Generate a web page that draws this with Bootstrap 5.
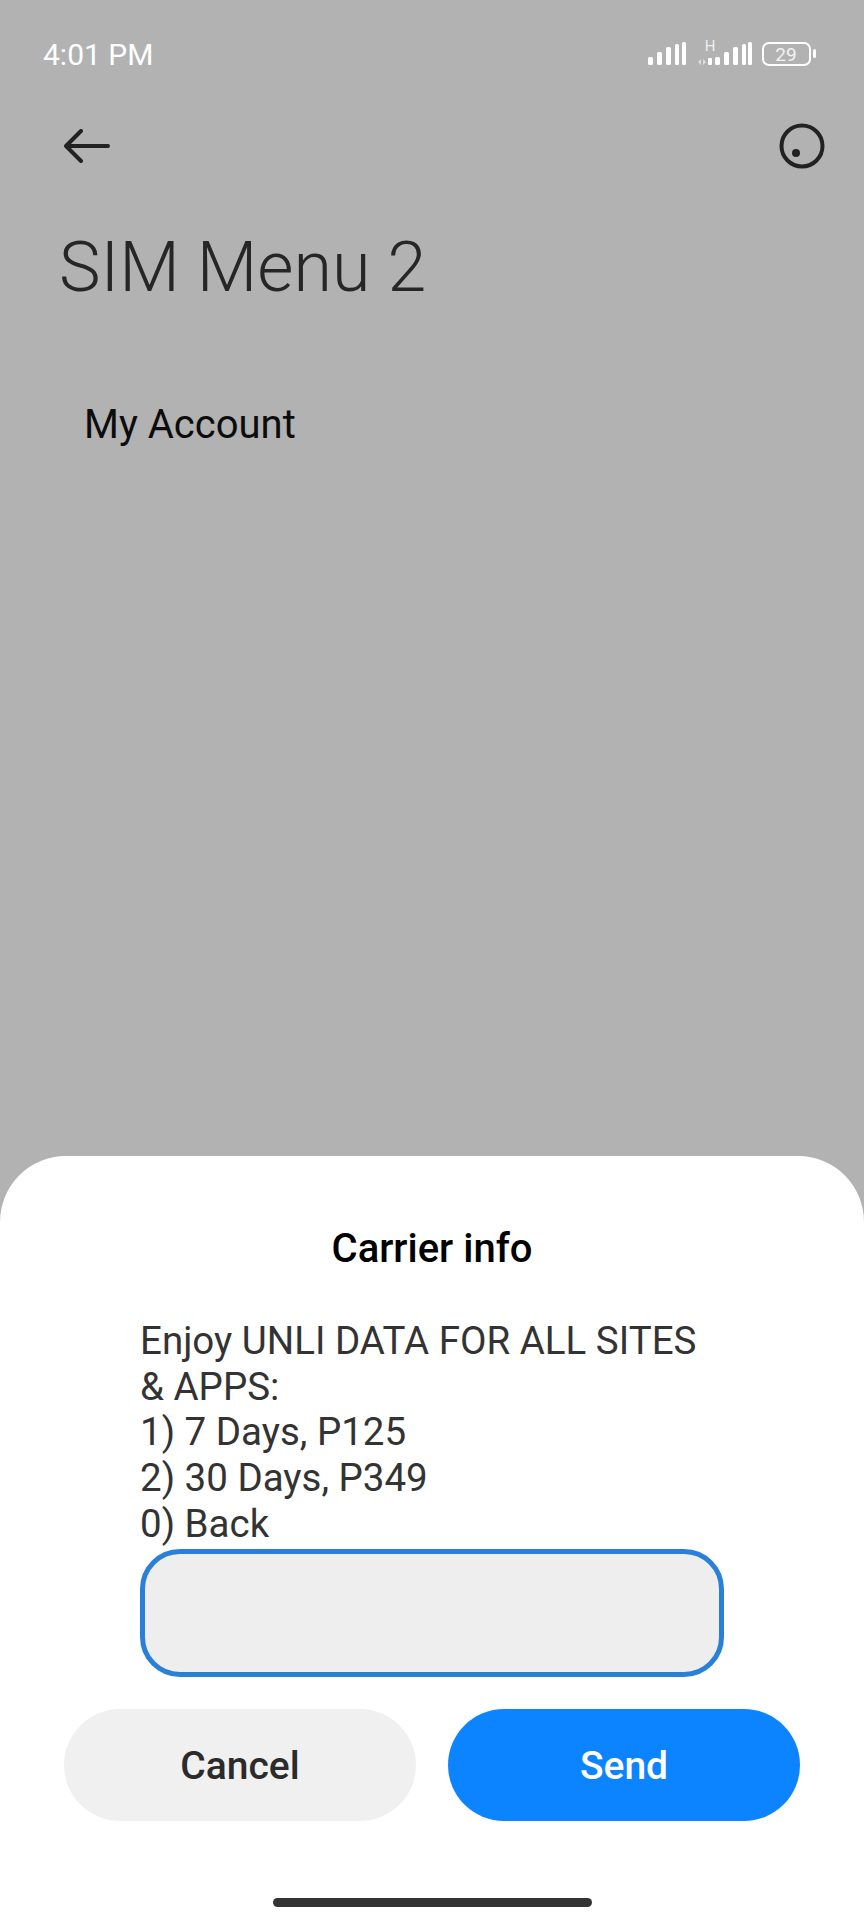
<!DOCTYPE html>
<html lang="en">
<head>
    <meta charset="UTF-8">
    <meta name="viewport" content="width=device-width, initial-scale=1.0">
    <title>SIM Menu 2</title>
    <link href="https://cdn.jsdelivr.net/npm/bootstrap@5.3.0/dist/css/bootstrap.min.css" rel="stylesheet">
    <style>
        body {
            font-family: Roboto, "Liberation Sans", sans-serif;
            background: #b2b2b2;
        }

        .phone-screen {
            width: 864px;
            height: 1920px;
            overflow: hidden;
            background: #b2b2b2;
        }

        .status-row {
            height: 72px;
            padding: 36px 40px 0 43px;
        }

        .status-time {
            font-size: 30px;
            line-height: 38px;
            color: #fff;
        }

        .top-row {
            height: 66px;
            margin-top: 41px;
            padding: 0 39px 0 64px;
        }

        .page-title {
            font-size: 70px;
            font-weight: 300;
            line-height: 84px;
            color: #262626;
            margin: 0;
            padding: 46px 0 0 59px;
        }

        .menu-row {
            font-size: 40px;
            line-height: 48px;
            color: #0c0c0c;
            padding: 92px 0 0 84px;
        }

        .sheet-panel {
            height: 764px;
            background: #fff;
            border-radius: 66px 66px 0 0;
            padding-top: 69px;
        }

        .sheet-title {
            font-size: 40px;
            font-weight: 500;
            line-height: 48px;
            color: #000;
            margin: 0;
        }

        .sheet-text {
            font-size: 38.5px;
            line-height: 45.7px;
            color: #333;
            margin: 45px 0 0 140px;
            width: 590px;
        }

        .reply-box {
            display: block;
            width: 584px;
            height: 128px;
            margin: 2px 0 0 140px;
            background: #eeeeef;
            border: 5px solid #2a80d8;
            border-radius: 40px;
        }

        .reply-box:focus {
            outline: none;
        }

        .sheet-actions {
            gap: 32px;
            margin: 32px 64px 0;
        }

        .sheet-btn {
            width: 352px;
            height: 112px;
            border: 0;
            border-radius: 56px;
            padding-top: 10px;
            font-size: 39px;
            font-weight: 500;
        }

        .sheet-btn.cancel-btn {
            background: #f0f0f0;
            color: #2b2b2b;
        }

        .sheet-btn.send-btn {
            background: #0d84ff;
            color: #fff;
        }

        .home-bar {
            width: 319px;
            height: 9px;
            margin: 77px auto 0;
            background: #333;
            border-radius: 5px;
        }
    </style>
</head>
<body class="m-0">
    <div class="phone-screen d-flex flex-column">
        <div class="status-row d-flex justify-content-between align-items-start">
            <span class="status-time">4:01 PM</span>
            <svg width="176" height="36" viewBox="0 0 176 36" fill="#fff" class="d-block">
                <!-- first signal -->
                <rect x="0" y="21" width="5" height="8" rx="1.5"/>
                <rect x="9" y="16" width="5" height="13" rx="1.5"/>
                <rect x="18" y="11" width="5" height="18" rx="1.5"/>
                <rect x="27" y="8" width="4" height="21" rx="1.5"/>
                <rect x="34" y="6" width="4" height="23" rx="1.5"/>
                <!-- second signal with H -->
                <text x="62" y="15" font-size="15" font-family="Roboto" text-anchor="middle" fill="#eee">H</text>
                <path d="M53 23l-3 3 3 3zM55 23l3 3-3 3z" fill="#ddd"/>
                <rect x="60" y="22" width="4" height="7" rx="1"/>
                <rect x="67" y="21" width="5" height="8" rx="1.5"/>
                <rect x="76" y="16" width="5" height="13" rx="1.5"/>
                <rect x="85" y="11" width="5" height="18" rx="1.5"/>
                <rect x="94" y="8" width="4" height="21" rx="1.5"/>
                <rect x="100" y="6" width="4" height="23" rx="1.5"/>
                <!-- battery -->
                <rect x="115" y="7" width="47" height="22" rx="6" fill="none" stroke="#fff" stroke-width="2"/>
                <text x="138" y="24.5" font-size="19" font-family="Roboto" text-anchor="middle" fill="#f2f2f2">29</text>
                <rect x="165" y="13" width="3" height="9" rx="1.5"/>
            </svg>
        </div>

        <div class="top-row d-flex justify-content-between align-items-center">
            <svg width="46" height="34" viewBox="0 0 46 34" fill="none" stroke="#222" stroke-width="4" stroke-linecap="round" stroke-linejoin="round">
                <path d="M44 17H3M17 2 2 17l15 15"/>
            </svg>
            <svg width="46" height="46" viewBox="0 0 46 46" fill="none">
                <circle cx="23" cy="23" r="20.5" stroke="#222" stroke-width="4"/>
                <circle cx="17" cy="30" r="4" fill="#222"/>
            </svg>
        </div>

        <h1 class="page-title">SIM Menu 2</h1>
        <div class="menu-row">My Account</div>

        <div class="sheet-panel mt-auto">
            <h2 class="sheet-title text-center">Carrier info</h2>
            <p class="sheet-text mb-0">Enjoy UNLI DATA FOR ALL SITES<br>&amp; APPS:<br>1) 7 Days, P125<br>2) 30 Days, P349<br>0) Back</p>
            <input class="reply-box" type="text" aria-label="Reply">
            <div class="sheet-actions d-flex">
                <button type="button" class="btn sheet-btn cancel-btn">Cancel</button>
                <button type="button" class="btn sheet-btn send-btn">Send</button>
            </div>
            <div class="home-bar"></div>
        </div>
    </div>
    <script src="https://cdn.jsdelivr.net/npm/bootstrap@5.3.0/dist/js/bootstrap.bundle.min.js"></script>
</body>
</html>
